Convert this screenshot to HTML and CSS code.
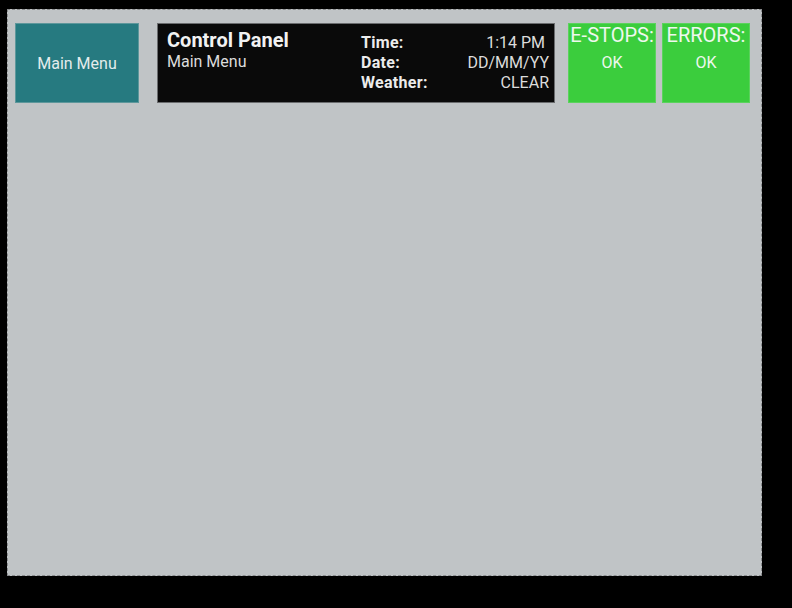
FILE: index.html
```html
<!DOCTYPE html>
<html>
<head>
<meta charset="utf-8">
<link rel="stylesheet" href="styles.css">
</head>
<body>
<div class="screen">
  <div class="header">
    <div class="menu-btn">Main Menu</div>
    <div class="info">
      <div class="titles">
        <div class="title">Control Panel</div>
        <div class="subtitle">Main Menu</div>
      </div>
      <div class="stats">
        <div class="label">Time:</div><div class="value">1:14 PM&nbsp;</div>
        <div class="label">Date:</div><div class="value">DD/MM/YY</div>
        <div class="label">Weather:</div><div class="value">CLEAR</div>
      </div>
    </div>
    <div class="status">
      <div class="status-name">E-STOPS:</div>
      <div class="status-val">OK</div>
    </div>
    <div class="status second">
      <div class="status-name">ERRORS:</div>
      <div class="status-val">OK</div>
    </div>
  </div>
</div>
</body>
</html>
```
FILE: styles.css
```css
html, body {
  margin: 0;
  padding: 0;
  background: #000;
  width: 792px;
  height: 608px;
  overflow: hidden;
  font-family: Roboto, "Liberation Sans", sans-serif;
}
.screen {
  box-sizing: border-box;
  margin: 9px 0 0 7px;
  width: 755px;
  height: 567px;
  background: #c0c4c6;
  border: 1px dashed #8a8c8e;
  padding: 13px 0 0 7px;
}
.header {
  display: flex;
  height: 80px;
}
.menu-btn {
  box-sizing: border-box;
  width: 124px;
  height: 80px;
  background: #267a80;
  border: 1px solid #5d979b;
  color: #e4ecec;
  font-size: 16px;
  display: flex;
  align-items: center;
  justify-content: center;
  padding-top: 1px;
}
.info {
  box-sizing: border-box;
  width: 398px;
  height: 80px;
  margin-left: 18px;
  background: #0a0a0a;
  border: 1px solid #6a6c6e;
  display: flex;
  justify-content: space-between;
  padding: 4px 5px 0 9px;
}
.title {
  font-size: 20px;
  font-weight: bold;
  line-height: 24px;
  color: #f2f2f2;
}
.subtitle {
  font-size: 16px;
  line-height: 20px;
  color: #dcdcdc;
}
.stats {
  width: 188px;
  padding-top: 5px;
  display: grid;
  grid-template-columns: auto 1fr;
  grid-auto-rows: 20px;
  font-size: 16px;
  line-height: 20px;
}
.label {
  font-weight: bold;
  color: #ececec;
  letter-spacing: 0.3px;
}
.value {
  text-align: right;
  color: #dcdcdc;
}
.status {
  box-sizing: border-box;
  width: 88px;
  height: 80px;
  margin-left: 13px;
  background: #3bcd3d;
  border: 1px solid #5ad35c;
  text-align: center;
  color: #eef8ee;
}
.status.second {
  margin-left: 6px;
}
.status-name {
  font-size: 20px;
  line-height: 23px;
  white-space: nowrap;
}
.status-val {
  font-size: 16px;
  line-height: 20px;
  margin-top: 6px;
}
```
